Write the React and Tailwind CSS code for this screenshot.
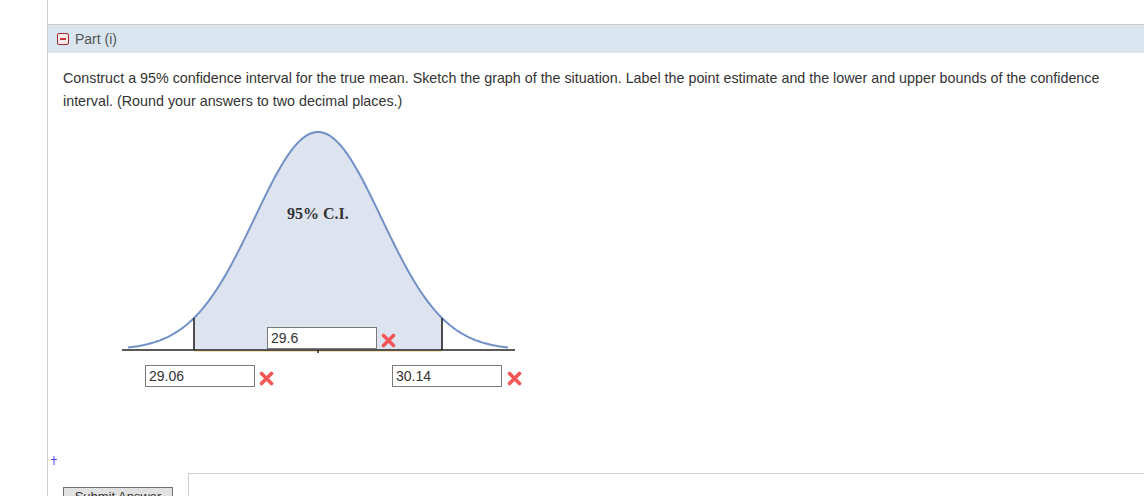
import React from 'react'

const CX = 208
const BASE = 230
const PEAK = 218
const SIGMA = 63.3

function yAt(x) {
  const z = (x - CX) / SIGMA
  return BASE - PEAK * Math.exp(-0.5 * z * z)
}

function curvePath(x0, x1) {
  const pts = []
  for (let x = x0; x <= x1; x += 2) pts.push(`${x},${yAt(x).toFixed(2)}`)
  pts.push(`${x1},${yAt(x1).toFixed(2)}`)
  return pts
}

const LO = 84
const HI = 332
const fullCurve = 'M' + curvePath(18, 398).join(' L')
const shaded = `M${LO},${BASE} L` + curvePath(LO, HI).join(' L') + ` L${HI},${BASE} Z`

function Cross({ className = '' }) {
  return (
    <svg width="15" height="15" viewBox="0 0 15 15" className={className}>
      <path d="M2.5 2.5 L12.5 12.5 M12.5 2.5 L2.5 12.5" stroke="#f15757" strokeWidth="3.6" strokeLinecap="round" />
    </svg>
  )
}

function Answer({ value, className = '' }) {
  return (
    <div className={`w-[110px] h-[22px] border border-[#7a7a7a] bg-white pl-[3px] flex items-center text-[14px] text-[#333] ${className}`}>
      {value}
    </div>
  )
}

export default function App() {
  return (
    <div className="h-[496px] w-[1144px] overflow-hidden bg-white flex" style={{ fontFamily: '"Liberation Sans", Arial, sans-serif' }}>
      <div className="w-[47px] flex-shrink-0" />
      <div className="flex-1 border-l border-[#cfcfcf] pt-[24px]">
        {/* part header */}
        <div className="border-t border-[#cbcbcb] h-[29px] bg-[#d9e5ef] flex items-center pl-[9px] gap-[6px]">
          <div className="w-[12px] h-[12px] rounded-[2px] border-[1.5px] border-[#9e2b2b] bg-[#fbeaea] flex items-center justify-center">
            <div className="w-[6px] h-[2px] bg-[#c23a3a]" />
          </div>
          <span className="text-[14px] text-[#555]">Part (i)</span>
        </div>

        <p className="mt-[14px] pl-[15px] w-[1075px] text-[14.3px] leading-[23px] text-[#333]">
          Construct a 95% confidence interval for the true mean. Sketch the graph of the situation. Label the point estimate and the lower and upper bounds of the confidence interval. (Round your answers to two decimal places.)
        </p>

        {/* graph */}
        <div className="relative ml-[62px] mt-[7px] w-[420px] h-[240px]">
          <svg width="420" height="240" viewBox="0 0 420 240" className="block">
            <path d={shaded} fill="#dde4ef" />
            <path d={fullCurve} fill="none" stroke="#7191c6" strokeWidth="2" />
            <line x1={LO} y1={BASE + 1} x2={HI} y2={BASE + 1} stroke="#e6c27a" strokeWidth="1" />
            <line x1="12" y1={BASE} x2="405" y2={BASE} stroke="#222" strokeWidth="1.5" />
            <line x1={LO} y1={yAt(LO)} x2={LO} y2={BASE} stroke="#222" strokeWidth="1.6" />
            <line x1={HI} y1={yAt(HI)} x2={HI} y2={BASE} stroke="#222" strokeWidth="1.6" />
            <line x1={CX} y1={BASE} x2={CX} y2={BASE + 3} stroke="#222" strokeWidth="1.5" />
          </svg>
          <span className="absolute left-[177px] top-[85px] text-[16px] leading-[18px] font-bold text-[#333]" style={{ fontFamily: '"Liberation Serif", "Times New Roman", serif' }}>
            95% C.I.
          </span>
          <Answer value="29.6" className="absolute left-[157px] top-[207px] h-[21px]" />
          <Cross className="absolute left-[271px] top-[213px]" />
        </div>

        <div className="mt-[5px] flex items-center">
          <Answer value="29.06" className="ml-[97px]" />
          <Cross className="ml-[4px] mt-[5px]" />
          <Answer value="30.14" className="ml-[118px]" />
          <Cross className="ml-[5px] mt-[5px]" />
        </div>

        <div className="mt-[69px] ml-[3px] h-[9px]">
          <svg width="6" height="9" viewBox="0 0 6 9" className="block">
            <path d="M3 0 V9 M0 3.5 H6" stroke="#4a4af0" strokeWidth="1" />
          </svg>
        </div>

        <div className="mt-[8px] flex items-start">
          <button className="ml-[15px] mt-[14px] w-[110px] border border-[#707070] bg-[#e1e1e1] text-[13px] text-[#333] leading-[15px] pt-[1px] pb-[3px]">
            Submit Answer
          </button>
          <div className="ml-[15px] flex-1 h-[60px] border border-r-0 border-[#cfcfcf]" />
        </div>
      </div>
    </div>
  )
}
